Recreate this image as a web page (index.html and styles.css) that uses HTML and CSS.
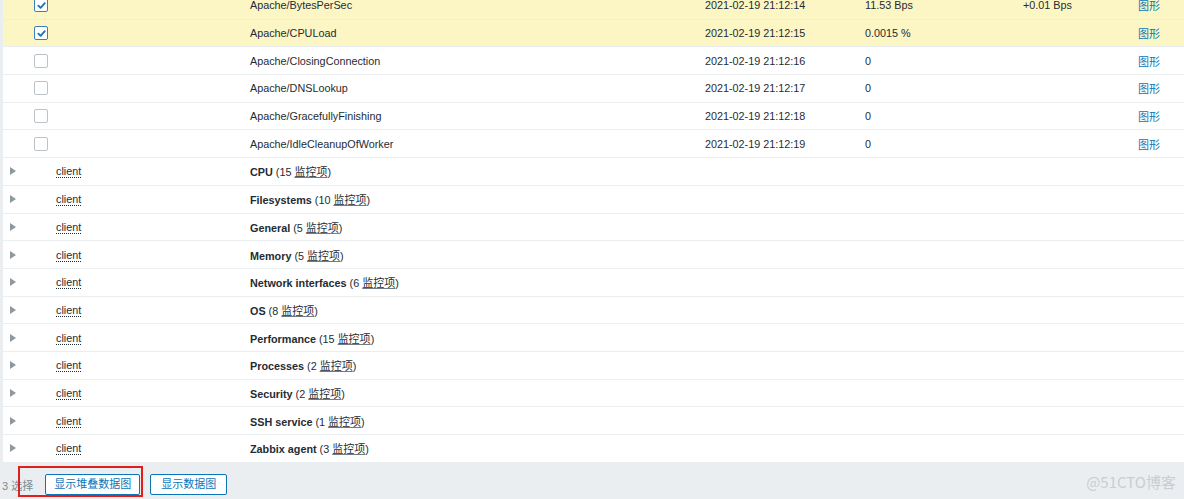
FILE: index.html
```html
<!DOCTYPE html>
<html lang="zh">
<head>
<meta charset="utf-8">
<title>最新数据</title>
<link rel="stylesheet" href="styles.css">
</head>
<body>
<div class="page">
  <div class="list">
    <div class="row selected">
      <div class="c0"><span class="cb checked"><svg viewBox="0 0 12 12"><path d="M2.5 6.2 L5 8.5 L9.6 3.4" /></svg></span></div>
      <div class="c1"></div>
      <div class="c2">Apache/BytesPerSec</div>
      <div class="c3">2021-02-19 21:12:14</div>
      <div class="c4">11.53 Bps</div>
      <div class="c5">+0.01 Bps</div>
      <div class="c6"><a class="link">图形</a></div>
    </div>
    <div class="row selected">
      <div class="c0"><span class="cb checked"><svg viewBox="0 0 12 12"><path d="M2.5 6.2 L5 8.5 L9.6 3.4" /></svg></span></div>
      <div class="c1"></div>
      <div class="c2">Apache/CPULoad</div>
      <div class="c3">2021-02-19 21:12:15</div>
      <div class="c4">0.0015 %</div>
      <div class="c5"></div>
      <div class="c6"><a class="link">图形</a></div>
    </div>
    <div class="row">
      <div class="c0"><span class="cb"></span></div>
      <div class="c1"></div>
      <div class="c2">Apache/ClosingConnection</div>
      <div class="c3">2021-02-19 21:12:16</div>
      <div class="c4">0</div>
      <div class="c5"></div>
      <div class="c6"><a class="link">图形</a></div>
    </div>
    <div class="row">
      <div class="c0"><span class="cb"></span></div>
      <div class="c1"></div>
      <div class="c2">Apache/DNSLookup</div>
      <div class="c3">2021-02-19 21:12:17</div>
      <div class="c4">0</div>
      <div class="c5"></div>
      <div class="c6"><a class="link">图形</a></div>
    </div>
    <div class="row">
      <div class="c0"><span class="cb"></span></div>
      <div class="c1"></div>
      <div class="c2">Apache/GracefullyFinishing</div>
      <div class="c3">2021-02-19 21:12:18</div>
      <div class="c4">0</div>
      <div class="c5"></div>
      <div class="c6"><a class="link">图形</a></div>
    </div>
    <div class="row">
      <div class="c0"><span class="cb"></span></div>
      <div class="c1"></div>
      <div class="c2">Apache/IdleCleanupOfWorker</div>
      <div class="c3">2021-02-19 21:12:19</div>
      <div class="c4">0</div>
      <div class="c5"></div>
      <div class="c6"><a class="link">图形</a></div>
    </div>

    <div class="row group"><div class="c0"><span class="arrow"></span></div><div class="c1"><span class="host">client</span></div><div class="c2"><b>CPU</b> (15 <u>监控项</u>)</div></div>
    <div class="row group"><div class="c0"><span class="arrow"></span></div><div class="c1"><span class="host">client</span></div><div class="c2"><b>Filesystems</b> (10 <u>监控项</u>)</div></div>
    <div class="row group"><div class="c0"><span class="arrow"></span></div><div class="c1"><span class="host">client</span></div><div class="c2"><b>General</b> (5 <u>监控项</u>)</div></div>
    <div class="row group"><div class="c0"><span class="arrow"></span></div><div class="c1"><span class="host">client</span></div><div class="c2"><b>Memory</b> (5 <u>监控项</u>)</div></div>
    <div class="row group"><div class="c0"><span class="arrow"></span></div><div class="c1"><span class="host">client</span></div><div class="c2"><b>Network interfaces</b> (6 <u>监控项</u>)</div></div>
    <div class="row group"><div class="c0"><span class="arrow"></span></div><div class="c1"><span class="host">client</span></div><div class="c2"><b>OS</b> (8 <u>监控项</u>)</div></div>
    <div class="row group"><div class="c0"><span class="arrow"></span></div><div class="c1"><span class="host">client</span></div><div class="c2"><b>Performance</b> (15 <u>监控项</u>)</div></div>
    <div class="row group"><div class="c0"><span class="arrow"></span></div><div class="c1"><span class="host">client</span></div><div class="c2"><b>Processes</b> (2 <u>监控项</u>)</div></div>
    <div class="row group"><div class="c0"><span class="arrow"></span></div><div class="c1"><span class="host">client</span></div><div class="c2"><b>Security</b> (2 <u>监控项</u>)</div></div>
    <div class="row group"><div class="c0"><span class="arrow"></span></div><div class="c1"><span class="host">client</span></div><div class="c2"><b>SSH service</b> (1 <u>监控项</u>)</div></div>
    <div class="row group"><div class="c0"><span class="arrow"></span></div><div class="c1"><span class="host">client</span></div><div class="c2"><b>Zabbix agent</b> (3 <u>监控项</u>)</div></div>
  </div>

  <div class="footer">
    <span class="count">3 选择</span>
    <button class="btn">显示堆叠数据图</button>
    <button class="btn btn-small">显示数据图</button>
    <span class="mark"></span>
    <span class="watermark">@51CTO博客</span>
  </div>
</div>
</body>
</html>
```

FILE: styles.css
```css
html, body {
  margin: 0;
  padding: 0;
  background: #ebeef0;
  height: 499px;
  overflow: hidden;
}

body {
  font-family: "Liberation Sans", Arial, "Noto Sans CJK SC", sans-serif;
  font-size: 10.8px;
  color: #1f2c33;
}

.page {
  position: relative;
  display: flow-root;
  height: 499px;
}

.list {
  margin-top: -8px;
  margin-left: 3px;
  background: #ffffff;
}

.row {
  display: grid;
  grid-template-columns: 53px 194px 455px 160px 158px 115px 1fr;
  align-items: center;
  height: 27.7px;
  box-sizing: border-box;
  border-bottom: 1px solid #ebeef0;
  background: #ffffff;
}

.row.selected {
  background: #fcf5c4;
}

.c0 {
  display: flex;
  align-items: center;
}

.row .c0 .cb {
  margin-left: 31px;
}

.row .c0 .arrow {
  margin-left: 7px;
}

.cb {
  display: inline-flex;
  align-items: center;
  justify-content: center;
  width: 14px;
  height: 14px;
  box-sizing: border-box;
  border: 1px solid #b9c3c8;
  border-radius: 2px;
  background: #ffffff;
}

.cb.checked {
  border-color: #3c7fb8;
}

.cb svg {
  width: 11px;
  height: 11px;
}

.cb svg path {
  fill: none;
  stroke: #1d73b8;
  stroke-width: 2;
  stroke-linecap: round;
  stroke-linejoin: round;
}

.arrow {
  display: inline-block;
  width: 0;
  height: 0;
  border-top: 4px solid transparent;
  border-bottom: 4px solid transparent;
  border-left: 6px solid #8d989f;
}

.host {
  border-bottom: 1px dotted #1f2c33;
  line-height: 12px;
}

.c2 b {
  font-weight: bold;
}

.c2 u {
  font-size: 11px;
  text-decoration: underline;
  text-decoration-color: #6f7c84;
}

.link {
  font-size: 11px;
  color: #0a75b9;
  text-decoration: none;
}

.footer {
  display: flex;
  align-items: center;
  height: 36px;
  padding-left: 2px;
  padding-top: 8px;
  box-sizing: border-box;
}

.count {
  color: #768d99;
  font-size: 11px;
  margin-right: 12px;
}

.btn {
  height: 21px;
  padding: 0 8px;
  margin-right: 10px;
  border: 1px solid #0a75b9;
  border-radius: 2px;
  background: #ffffff;
  color: #0a75b9;
  font-family: "Liberation Sans", Arial, "Noto Sans CJK SC", sans-serif;
  font-size: 11px;
  line-height: 19px;
}

.btn-small {
  padding: 0 10px;
}

.mark {
  position: absolute;
  left: 18px;
  top: 466px;
  width: 125px;
  height: 31px;
  box-sizing: border-box;
  border: 2px solid #e0201e;
  pointer-events: none;
}

.watermark {
  position: absolute;
  right: 8px;
  bottom: 7px;
  font-family: "Noto Sans CJK SC", "Liberation Sans", sans-serif;
  font-size: 15px;
  color: #c9cdd0;
}
```
